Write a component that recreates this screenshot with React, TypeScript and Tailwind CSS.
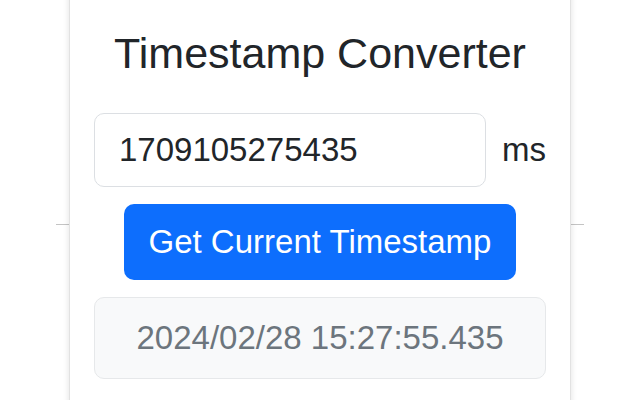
export default function App() {
  return (
    <div className="relative flex h-[400px] w-[640px] justify-center overflow-hidden bg-white font-['Liberation_Sans',Arial,sans-serif]">
      {/* page rule behind the popup */}
      <div className="absolute left-[56px] top-[224px] h-px w-[528px] bg-[#c4c4c4]" />

      <div className="relative z-10 -mt-[10px] h-[460px] w-[502px] rounded-md border border-[#e2e2e2] bg-white px-[24px] pt-[36px] shadow-[0_0_6px_rgba(0,0,0,0.12)]">
        <h1 className="text-center text-[43px] font-normal leading-[52px] text-[#212529]">Timestamp Converter</h1>

        <div className="mt-[34px] flex items-center gap-4">
          <input
            type="text"
            defaultValue="1709105275435"
            className="h-[74px] min-w-0 flex-1 rounded-[10px] border border-[#dcdfe3] bg-white pl-6 text-[33px] text-[#212529] outline-none"
          />
          <span className="text-[33px] text-[#212529]">ms</span>
        </div>

        <div className="mt-[17px] flex justify-center">
          <button
            type="button"
            className="h-[76px] w-[392px] rounded-[10px] bg-[#0d6efd] text-[33px] text-white"
          >
            Get Current Timestamp
          </button>
        </div>

        <div className="mt-[17px] flex h-[82px] items-center justify-center rounded-[10px] border border-[#e6e8ea] bg-[#f8f9fa] text-[33px] text-[#6c757d]">
          2024/02/28 15:27:55.435
        </div>
      </div>
    </div>
  )
}
